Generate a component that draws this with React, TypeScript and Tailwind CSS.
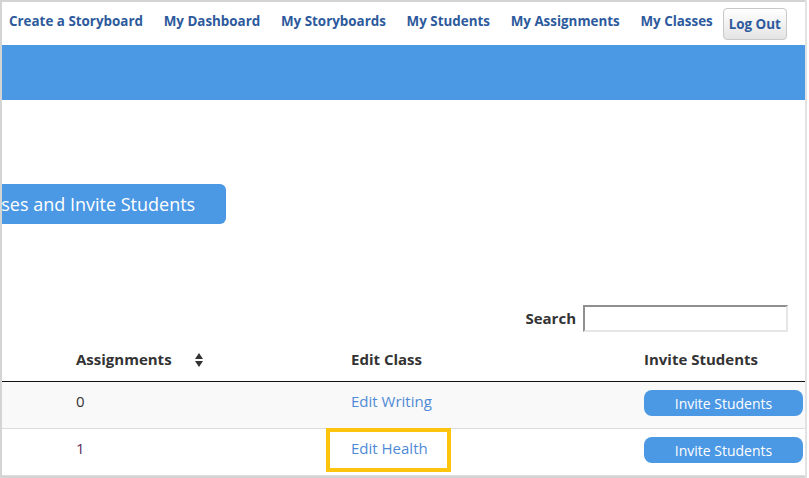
import { useState } from "react";

const NAV_LINKS = [
  "Create a Storyboard",
  "My Dashboard",
  "My Storyboards",
  "My Students",
  "My Assignments",
  "My Classes",
];

const ROWS = [
  { assignments: "0", className: "Writing", striped: true, visited: false },
  { assignments: "1", className: "Health", striped: false, visited: true },
];

function SortIcon() {
  return (
    <svg width="8" height="14" viewBox="0 0 8 14" className="ml-[23px]">
      <polygon points="4,0 8,6 0,6" fill="#333" />
      <polygon points="0,8 8,8 4,14" fill="#333" />
    </svg>
  );
}

export default function App() {
  const [query, setQuery] = useState("");

  return (
    <div
      className="w-[809px] h-[478px] flex bg-white overflow-hidden"
      style={{ fontFamily: '"Open Sans", "Liberation Sans", sans-serif' }}
    >
      <div className="w-[805px] h-full flex flex-col border-l-2 border-t-2 border-b-2 border-[#d4d4d4] overflow-hidden">
        {/* top nav */}
        <div className="h-[43px] shrink-0 flex items-center pl-[7px] gap-[20.7px] text-[13.4px] font-bold text-[#2d5a9c]">
          {NAV_LINKS.map((l) => (
            <a key={l} className="whitespace-nowrap leading-none pb-[3px]">
              {l}
            </a>
          ))}
          <button className="-ml-[10.7px] h-[32px] w-[64px] rounded-[4px] border border-[#c8c8c8] bg-gradient-to-b from-white to-[#e4e4e4] text-[13.4px] font-bold text-[#2d5a9c] whitespace-nowrap mt-[1px]">
            Log Out
          </button>
        </div>

        <div className="h-[55px] shrink-0 bg-[#4b98e4]" />

        <div className="h-[84px] shrink-0" />

        {/* manage button, scrolled partly off the left edge */}
        <div className="shrink-0 flex">
          <button className="-ml-[124px] shrink-0 h-[40px] pl-[17px] pr-[31px] rounded-[6px] bg-[#4b98e4] text-white text-[18px] whitespace-nowrap">
            Manage Classes and Invite Students
          </button>
        </div>

        <div className="h-[81px] shrink-0" />

        {/* search */}
        <div className="shrink-0 flex items-center justify-end pr-[17px] gap-[7px]">
          <label className="text-[15px] font-bold text-[#333]">Search</label>
          <input
            value={query}
            onChange={(e) => setQuery(e.target.value)}
            className="w-[205px] h-[27px] border-2 border-t-[#8f8f8f] border-l-[#8f8f8f] border-r-[#e6e6e6] border-b-[#e6e6e6] outline-none px-1 text-[13px]"
          />
        </div>

        {/* table */}
        <div className="mt-[6px] text-[15px] text-[#333]">
          <div className="flex h-[44px] items-center border-b border-[#111] font-bold">
            <div className="w-[66px]" />
            <div className="w-[275px] pl-[8px] flex items-center">
              Assignments
              <SortIcon />
            </div>
            <div className="w-[293px] pl-[8px]">Edit Class</div>
            <div className="w-[167px] pl-[8px]">Invite Students</div>
          </div>
          {ROWS.map((r) => (
            <div
              key={r.className}
              className={`flex h-[47px] border-b border-[#dddddd] ${
                r.striped ? "bg-[#f9f9f9]" : "bg-white"
              }`}
            >
              <div className="w-[66px]" />
              <div
                className={`w-[275px] pl-[8px] pt-[9px] leading-[20px] ${
                  r.visited ? "text-[#5a2f5c]" : "text-[#333]"
                }`}
              >
                {r.assignments}
              </div>
              <div className="w-[293px] pl-[8px] pt-[9px] leading-[20px] relative">
                <a className="text-[#4f8ad6]">Edit {r.className}</a>
                {r.visited && (
                  <div className="absolute left-[-17px] top-[-1px] w-[125px] h-[44px] border-[4px] border-[#fcc40c]" />
                )}
              </div>
              <div className="w-[167px] pl-[8px] pt-[8px]">
                <button className="w-[159px] h-[26px] rounded-[8px] bg-[#4b98e4] text-white text-[14px]">
                  Invite Students
                </button>
              </div>
            </div>
          ))}
        </div>
      </div>
      <div className="w-[2px] h-full bg-[#e2e2e2]" />
      <div className="flex-1" />
    </div>
  );
}
